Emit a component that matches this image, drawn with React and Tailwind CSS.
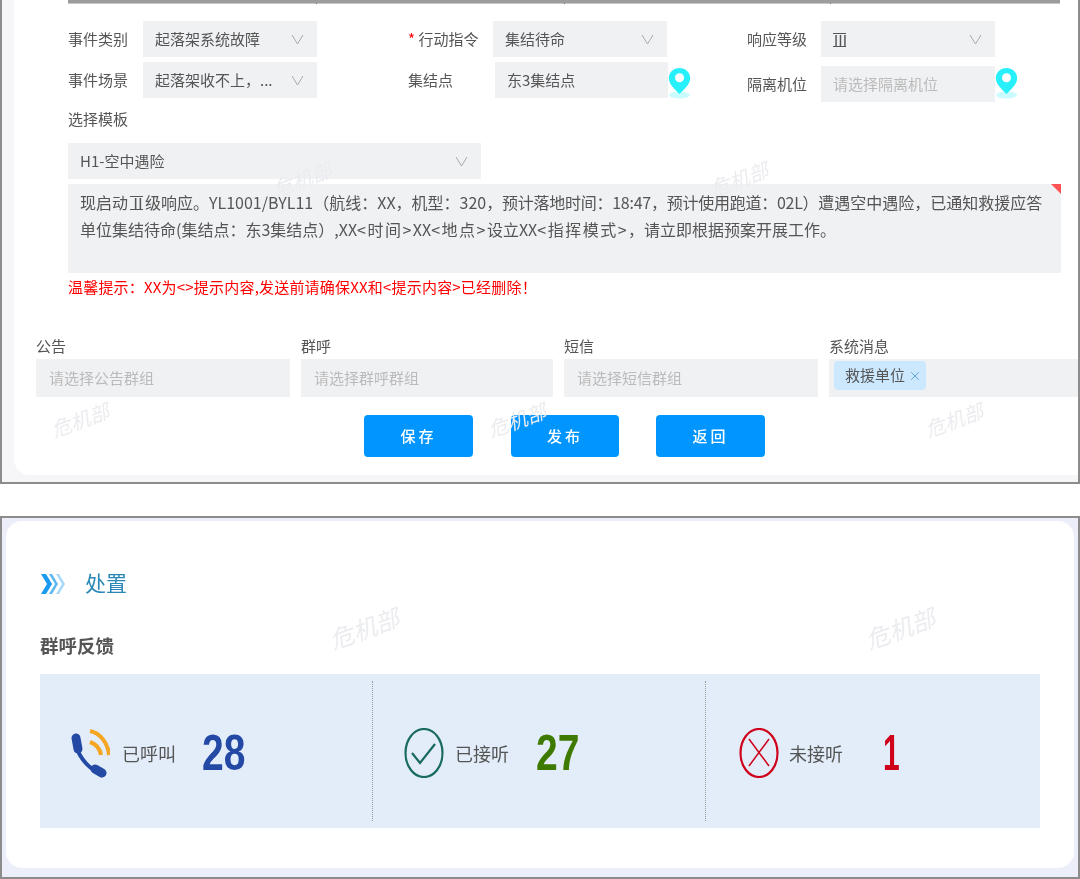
import { X } from 'lucide-react';

const FONT = 'font-["Noto_Sans_CJK_SC","Liberation_Sans",sans-serif]';

function Caret() {
  return (
    <svg width="13" height="11" viewBox="0 0 13 11" className="shrink-0">
      <path d="M1 1 6.500 10 12 1" fill="none" stroke="#aaa" strokeWidth="1" />
    </svg>
  );
}

function Select({ value, className }) {
  return (
    <div className={`h-9 bg-[#f0f1f3] pl-3 pr-[13px] flex items-center justify-between text-[15px] text-[#555] ${className}`}>
      <span>{value}</span>
      <Caret />
    </div>
  );
}

function Pin() {
  return (
    <svg width="23" height="32" viewBox="0 0 23 32" className="shrink-0">
      <ellipse cx="11.5" cy="28" rx="10.5" ry="3.5" fill="#c9fbff" />
      <path d="M11.5 1C5.4 1 .8 5.6.8 11.3c0 6 6.400 11.500 10.700 15.700 4.300-4.200 10.700-9.700 10.700-15.700C22.200 5.600 17.600 1 11.500 1z" fill="#27f0fb" />
      <circle cx="11.500" cy="10.800" r="4.500" fill="#fff" />
    </svg>
  );
}

// roman numerals with the top and bottom bars they have in the reference
function Roman({ children }) {
  return (
    <span className="inline-block align-[-1px] w-[13px] h-[14px] leading-[12px] text-center border-y border-[#555] tracking-[-0.5px]">{children}</span>
  );
}

function GroupField({ label, placeholder, className, children }) {
  return (
    <div className={className}>
      <div className="h-6 leading-[22px] text-[15px] text-[#555]">{label}</div>
      <div className="h-[38px] bg-[#f0f1f3] flex items-center text-[15px] text-[#bbb] pl-[13px]">
        {children || placeholder}
      </div>
    </div>
  );
}

function Stat({ icon, label, number, numberClass, className }) {
  return (
    <div className={`w-[332px] pt-1 flex items-center ${className}`}>
      {icon}
      <span className="text-[18px] text-[#555] whitespace-nowrap">{label}</span>
      <span className={`inline-block font-["Liberation_Sans"] font-bold text-[50px] leading-none origin-left ${numberClass}`}>{number}</span>
    </div>
  );
}

function Watermark({ className }) {
  return (
    <div className={`absolute pointer-events-none italic text-[#ebecef] -rotate-[20deg] ${className}`}>危机部</div>
  );
}

export default function App() {
  return (
    <div className={`relative w-[1080px] h-[879px] overflow-hidden bg-white blur-[0.5px] ${FONT}`}>
      {/* top window */}
      <div className="h-[484px] border-x-2 border-b-2 border-[#8c8c8c] bg-[#f6f6f8] pl-3 pb-[7px]">
        <div className="h-full bg-white rounded-bl-2xl">
          {/* bottom edge of the table cut off above */}
          <div className="ml-[54px] w-[992px] h-1 flex bg-[#c8c8c8] border-t-[3px] border-[#9c9c9c]">
            <div className="w-[249px] border-r border-[#777]" />
            <div className="w-[248px] border-r border-[#777]" />
            <div className="w-[266px] border-r border-[#777]" />
          </div>

          <div className="flex items-center mt-[17px] pl-[54px]">
            <div className="w-[75px] text-[15px] text-[#555]">事件类别</div>
            <Select value="起落架系统故障" className="w-[174px]" />
            <div className="ml-[91px] w-[85px] text-[15px] text-[#555] whitespace-nowrap"><span className="text-[#f00]">*</span> 行动指令</div>
            <Select value="集结待命" className="w-[174px]" />
            <div className="ml-[80px] w-[74px] text-[15px] text-[#555]">响应等级</div>
            <Select value={<Roman>Ⅲ</Roman>} className="w-[174px]" />
          </div>

          <div className="flex items-start mt-[5px] pl-[54px]">
            <div className="w-[75px] h-9 leading-9 text-[15px] text-[#555]">事件场景</div>
            <Select value="起落架收不上，..." className="w-[174px]" />
            <div className="ml-[91px] w-[87px] h-9 leading-9 text-[15px] text-[#555]">集结点</div>
            <div className="w-[173px] h-9 bg-[#f0f1f3] pl-3 leading-9 text-[15px] text-[#555]">东3集结点</div>
            <div className="mt-[5px]"><Pin /></div>
            <div className="ml-[56px] w-[74px] mt-1 h-9 leading-9 text-[15px] text-[#555]">隔离机位</div>
            <div className="mt-1 w-[174px] h-9 bg-[#f0f1f3] pl-3 leading-9 text-[15px] text-[#bbb]">请选择隔离机位</div>
            <div className="mt-[5px]"><Pin /></div>
          </div>

          <div className="ml-[54px] mt-[6px] h-[22px] leading-[22px] text-[15px] text-[#555]">选择模板</div>
          <Select value="H1-空中遇险" className="ml-[54px] mt-[13px] w-[413px]" />

          <div className="relative ml-[54px] mt-[5px] w-[993px] h-[89px] bg-[#f0f1f3] px-3 py-[5px] text-[16px] leading-[27px] text-[#555] whitespace-nowrap">
            <div className="absolute top-0 right-0 w-0 h-0 border-l-[10px] border-b-[10px] border-l-transparent border-b-transparent border-t-[10px] border-r-[10px] border-t-[#ff5252] border-r-[#ff5252] scale-50 origin-top-right" />
            现启动<span className="mx-[2px]"><Roman>Ⅱ</Roman></span>级响应。YL1001/BYL11（航线：XX，机型：320<span className="tracking-[-0.25px]">，预计落地时间：18:47，预计使用跑道：02L）</span>遭遇空中遇险，已通知救援应答
            <br />
            单位集结待命(集结点：东3集结点）,XX<span className="tracking-[1.5px]">&lt;时间&gt;</span>XX<span className="tracking-[1.5px]">&lt;地点&gt;</span>设立XX<span className="tracking-[1.5px]">&lt;指挥模式&gt;</span>，请立即根据预案开展工作。
          </div>

          <div className="ml-[54px] mt-[3px] h-[22px] leading-[22px] text-[15px] tracking-[0.2px] text-[#f00]">温馨提示：XX为&lt;&gt;提示内容,发送前请确保XX和&lt;提示内容&gt;已经删除！</div>

          <div className="flex mt-[37px] pl-[22px] overflow-hidden">
            <GroupField label="公告" placeholder="请选择公告群组" className="w-[254px] shrink-0" />
            <GroupField label="群呼" placeholder="请选择群呼群组" className="w-[252px] shrink-0 ml-[11px]" />
            <GroupField label="短信" placeholder="请选择短信群组" className="w-[254px] shrink-0 ml-[11px]" />
            <GroupField label="系统消息" className="w-[260px] shrink-0 ml-[11px]">
              <div className="-ml-2 -mt-[5px] h-[29px] w-[92px] rounded-sm bg-[#cce8ff] flex items-center pl-[11px] text-[#555]">
                救援单位
                <X size={14} strokeWidth={1.3} className="ml-[3px] text-[#3d93c9]" />
              </div>
            </GroupField>
          </div>

          <div className="flex mt-[18px] pl-[350px] text-white text-[15px] font-medium tracking-[3px]">
            <button className="w-[109px] h-[42px] rounded bg-[#0095ff]">保存</button>
            <button className="w-[108px] h-[42px] rounded bg-[#0095ff] ml-[38px]">发布</button>
            <button className="w-[109px] h-[42px] rounded bg-[#0095ff] ml-[37px]">返回</button>
          </div>
        </div>
      </div>

      {/* bottom window */}
      <div className="mt-[32px] h-[363px] border-2 border-[#8c8c8c] bg-[#eceefa] pl-1 pr-1 pt-[3px] pb-[9px]">
        <div className="h-full bg-white rounded-2xl pl-[34px] pr-[34px] pt-[46px]">
          <div className="flex items-center h-8">
            <svg width="26" height="24" viewBox="0 0 26 24" className="shrink-0 mt-[2px]">
              <path d="M1 2h5l6 10-6 10H1l6-10z" fill="#1a9bf0" />
              <path d="M9 2h3l6 10-6 10H9l6-10z" fill="#5cb8f5" />
              <path d="M16 2h3l6 10-6 10h-3l6-10z" fill="#a9d9fa" />
            </svg>
            <span className="ml-[19px] text-[21px] text-[#2b87b8]">处置</span>
          </div>
          <div className="mt-[32px] h-7 leading-7 text-[18.500px] font-bold text-[#555]">群呼反馈</div>
          <div className="mt-[15px] h-[154px] bg-[#e2edf9] flex py-[7px]">
            <Stat
              className="pl-[30px]"
              label="已呼叫"
              number="28"
              numberClass="text-[#2349a5] ml-[26px] scale-x-[.78]"
              icon={
                <svg width="40" height="50" viewBox="0 0 40 50" className="mr-3 shrink-0">
                  <path d="M6 14C6 24 16 40 30 45" fill="none" stroke="#2349a5" strokeWidth="4" />
                  <path d="M6 10 8 21" stroke="#2349a5" strokeWidth="9" strokeLinecap="round" />
                  <path d="M25 41 32 45" stroke="#2349a5" strokeWidth="9" strokeLinecap="round" />
                  <path d="M20 3C30 5 38 15 39 27" fill="none" stroke="#f5a623" strokeWidth="4" />
                  <path d="M20 14C26 16 30 21 31 27" fill="none" stroke="#f5a623" strokeWidth="4" />
                </svg>
              }
            />
            <div className="border-l border-dotted border-[#999]" />
            <Stat
              className="pl-[31px]"
              label="已接听"
              number="27"
              numberClass="text-[#3f7a00] ml-[27px] scale-x-[.78]"
              icon={
                <svg width="40" height="50" viewBox="0 0 40 50" className="mr-[11px] shrink-0">
                  <ellipse cx="20" cy="25" rx="18.500" ry="24" fill="none" stroke="#1a6b5f" strokeWidth="2.200" />
                  <path d="M8 25 16 35 31 16" fill="none" stroke="#1a6b5f" strokeWidth="2.200" />
                </svg>
              }
            />
            <div className="border-l border-dotted border-[#999]" />
            <Stat
              className="pl-[33px]"
              label="未接听"
              number="1"
              numberClass="text-[#d0021b] ml-[40px] scale-x-[.6]"
              icon={
                <svg width="40" height="50" viewBox="0 0 40 50" className="mr-[10px] shrink-0">
                  <ellipse cx="20" cy="25" rx="18.500" ry="24" fill="none" stroke="#d0021b" strokeWidth="2.200" />
                  <path d="M10 11 30 38M30 11 10 38" fill="none" stroke="#d0021b" strokeWidth="1.500" />
                </svg>
              }
            />
          </div>
        </div>
      </div>

      <Watermark className="left-[272px] top-[164px] text-[20px]" />
      <Watermark className="left-[709px] top-[164px] text-[20px]" />
      <Watermark className="left-[50px] top-[405px] text-[20px]" />
      <Watermark className="left-[487px] top-[405px] text-[20px]" />
      <Watermark className="left-[924px] top-[405px] text-[20px]" />
      <Watermark className="left-[328px] top-[610px] text-[24px]" />
      <Watermark className="left-[864px] top-[610px] text-[24px]" />
    </div>
  );
}
